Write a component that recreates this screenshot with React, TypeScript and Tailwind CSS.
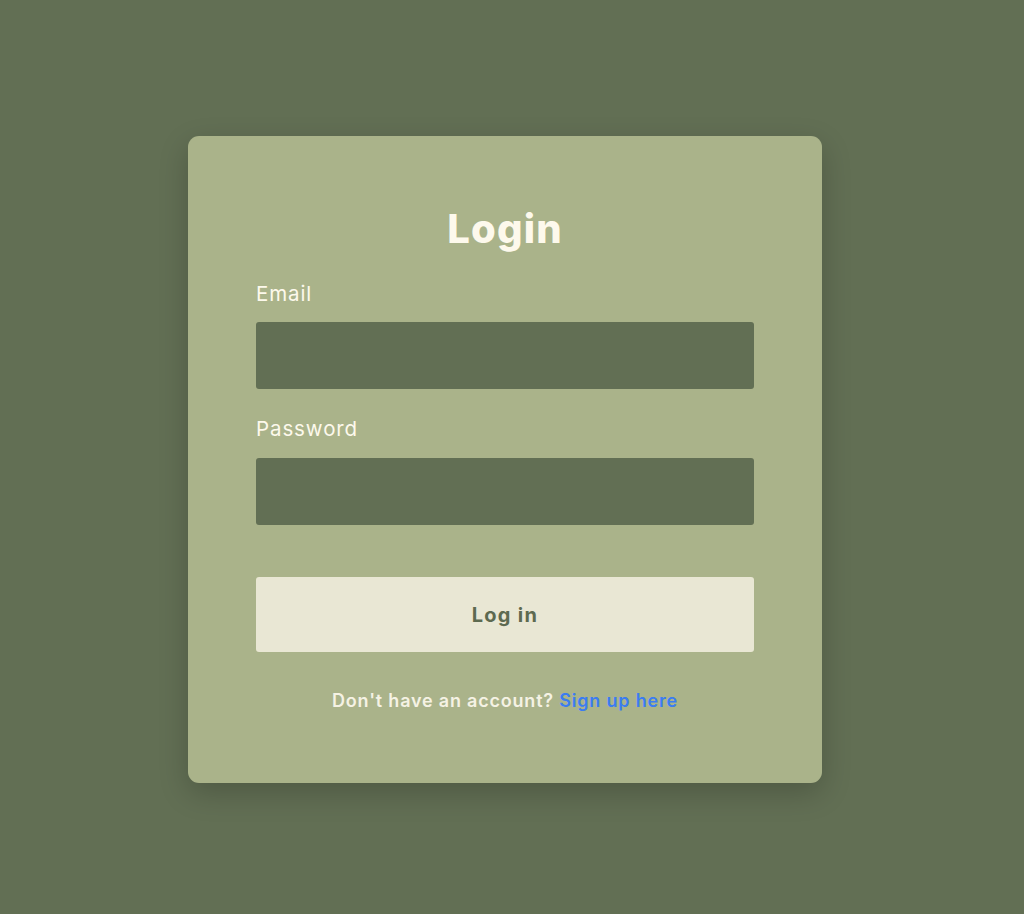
import React, { useState } from 'react';

const App: React.FC = () => {
  const [email, setEmail] = useState('');
  const [password, setPassword] = useState('');

  return (
    <div
      className="min-h-[914px] w-full bg-[#626f54] flex items-center justify-center pr-[14px] pt-[5px]"
      style={{ fontFamily: 'Inter, "Noto Sans", sans-serif' }}
    >
      <form
        onSubmit={(e) => e.preventDefault()}
        className="w-[634px] h-[647px] bg-[#aab38a] rounded-[11px] shadow-[0_10px_30px_rgba(0,0,0,0.2)] px-[68px] pt-[69px] flex flex-col"
      >
        <h1 className="text-[40px] leading-[48px] font-extrabold text-[#fdf9ec] text-center tracking-[1.2px]">Login</h1>

        <label className="mt-[26px] text-[20.5px] leading-[30px] text-[#fdf9ec] tracking-[0.9px]">Email</label>
        <input
          type="email"
          value={email}
          onChange={(e) => setEmail(e.target.value)}
          className="mt-[13px] h-[67px] w-full rounded-[3px] bg-[#626f54] outline-none px-4 text-[#fdf9ec]"
        />

        <label className="mt-[25px] text-[20.5px] leading-[30px] text-[#fdf9ec] tracking-[0.9px]">Password</label>
        <input
          type="password"
          value={password}
          onChange={(e) => setPassword(e.target.value)}
          className="mt-[14px] h-[67px] w-full rounded-[3px] bg-[#626f54] outline-none px-4 text-[#fdf9ec]"
        />

        <button
          type="submit"
          className="mt-[52px] h-[75px] w-full rounded-[3px] bg-[#e9e7d4] text-[#5d6a50] text-[20px] font-bold tracking-[1.3px]"
        >
          Log in
        </button>

        <p className="mt-[35px] text-center text-[18px] leading-[28px] font-semibold text-[#f5f2e4] tracking-[0.8px]">
          Don't have an account?{' '}
          <a href="#" className="text-[#3b7cf2]">Sign up here</a>
        </p>
      </form>
    </div>
  );
};

export default App;
